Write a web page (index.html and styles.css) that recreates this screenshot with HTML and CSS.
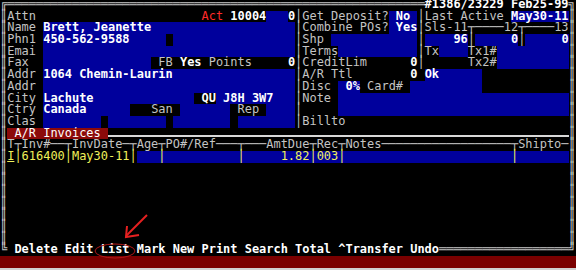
FILE: index.html
```html
<!DOCTYPE html>
<html lang="en">
<head>
  <meta charset="UTF-8" />
  <meta name="viewport" content="width=device-width, initial-scale=1.0"/>
  <title>Client - A/R Invoices</title>
  <link rel="stylesheet" href="styles.css">
</head>
<body>

<div class="screen">
  <div class="rows">
    <div class="row">╔══════════════════════════════════════════════════════════<span class="v">#1386/23229 Feb25-99</span>╗</div>
    <div class="row">║Attn                       <span class="act">Act</span> <span class="v">10004</span><span class="b">   </span><span class="v">0</span>│Get Deposit?<span class="b v"> No </span>│Last Active <span class="b v">May30-11</span>║</div>
    <div class="row">║Name <span class="b v">Brett, Jeanette                    </span>│Combine POs?<span class="b v"> Yes</span>│Sls-11┬────12┬────13║</div>
    <div class="row">║Phn1 <span class="b v">450-562-9588     </span> <span class="b">                 </span>│Shp <span class="b">            </span>│<span class="b v">    96</span>│<span class="b v">     0</span>│<span class="b v">     0</span>║</div>
    <div class="row">║Emai <span class="b">                                   </span>│Terms<span class="b">           </span>│Tx<span class="b">    </span>Tx1#<span class="b">          </span>║</div>
    <div class="row">║Fax  <span class="b">               </span> FB <span class="v">Yes</span> Points     <span class="v">0</span>│CreditLim      <span class="v">0</span>│      Tx2#<span class="b">          </span>║</div>
    <div class="row">║Addr <span class="b v">1064 Chemin-Laurin                 </span>│A/R Ttl        <span class="v">0</span> <span class="b v">Ok      </span>            ║</div>
    <div class="row">║Addr <span class="b">                                   </span>│Disc <span class="b v"> 0%</span> Card# <span class="b">          </span>            ║</div>
    <div class="row">║City <span class="b v">Lachute              </span><span class="v"> QU</span><span class="b v"> J8H 3W7   </span>│Note <span class="b">                                </span>║</div>
    <div class="row">║Ctry <span class="b v">Canada      </span>   San <span class="b">       </span> Rep <span class="b">    </span>│     <span class="b">                                </span>║</div>
    <div class="row">║Clas <span class="b">        </span> <span class="b">        </span> <span class="b">        </span> <span class="b">        </span>│Billto                               ║</div>
    <div class="row">║<span class="tab"> A/R Invoices </span><span class="rule"></span>║</div>
    <div class="row">║T┬Inv#──┬InvDate─┬Age┬PO#/Ref───┬───AmtDue┬Rec┬Notes──────────────────┬Shipto─║</div>
    <div class="row">║<span class="hot"><u>I</u>│616400│May30-11│</span><span class="b hot">   │          │     1.82│003│                       │       </span>║</div>
    <div class="row">║                                                                              ║</div>
    <div class="row">║                                                                              ║</div>
    <div class="row">║                                                                              ║</div>
    <div class="row">║                                                                              ║</div>
    <div class="row">║                                                                              ║</div>
    <div class="row">║                                                                              ║</div>
    <div class="row">║                                                                              ║</div>
    <div class="row">╚ <span class="v">Delete Edit List Mark New Print Search Total ^Transfer Undo</span>══════════════════╝</div>
    <div class="status"></div>
    <div class="edge"></div>
  </div>

  <!-- annotation drawn over the capture -->
  <svg class="note" width="576" height="270" viewBox="0 0 576 270">
    <path d="M147 215 L126 236" stroke="#e52020" stroke-width="2" fill="none"/>
    <path d="M127 226 L126 237 L139 235" stroke="#e52020" stroke-width="2" fill="none"/>
    <ellipse cx="115" cy="251" rx="20" ry="7" stroke="#b01818" stroke-width="1" fill="none"/>
  </svg>
</div>

</body>
</html>
```

FILE: styles.css
```css
:root {
  --field-blue: #00009c;
  --tab-red: #8c0a0a;
  --bar-red: #7a0000;
  --label: #c4c4c4;
  --hot: #f0f05a;
}

* {
  box-sizing: border-box;
}

body {
  margin: 0;
  background: #000;
  overflow: hidden;
}

.screen {
  position: relative;
  width: 576px;
  height: 270px;
  overflow: hidden;
  background: #000;
  font-family: 'DejaVu Sans Mono', monospace;
  font-size: 11.96px;
  color: var(--label);
}

.rows {
  margin-top: -1px;
}

.row {
  height: 11.7px;
  line-height: 11.7px;
  white-space: pre;
}

.b {
  display: inline-block;
  background: var(--field-blue);
}

.v {
  color: #fff;
  font-weight: bold;
}

.act {
  color: #ff2a2a;
}

.tab {
  display: inline-block;
  background: var(--tab-red);
  color: #fff;
}

/* divider under the tab, drawn a little low like the capture */
.rule {
  display: inline-block;
  width: 64ch;
  height: 9px;
  border-bottom: 2px solid #d8d8d8;
  vertical-align: top;
}

.hot {
  color: var(--hot);
}

.hot u {
  text-decoration-color: var(--hot);
}

.status {
  height: 11.7px;
  background: var(--bar-red);
}

.edge {
  height: 6px;
  background: #d0d0d0;
}

.note {
  position: absolute;
  left: 0;
  top: 0;
}
```
